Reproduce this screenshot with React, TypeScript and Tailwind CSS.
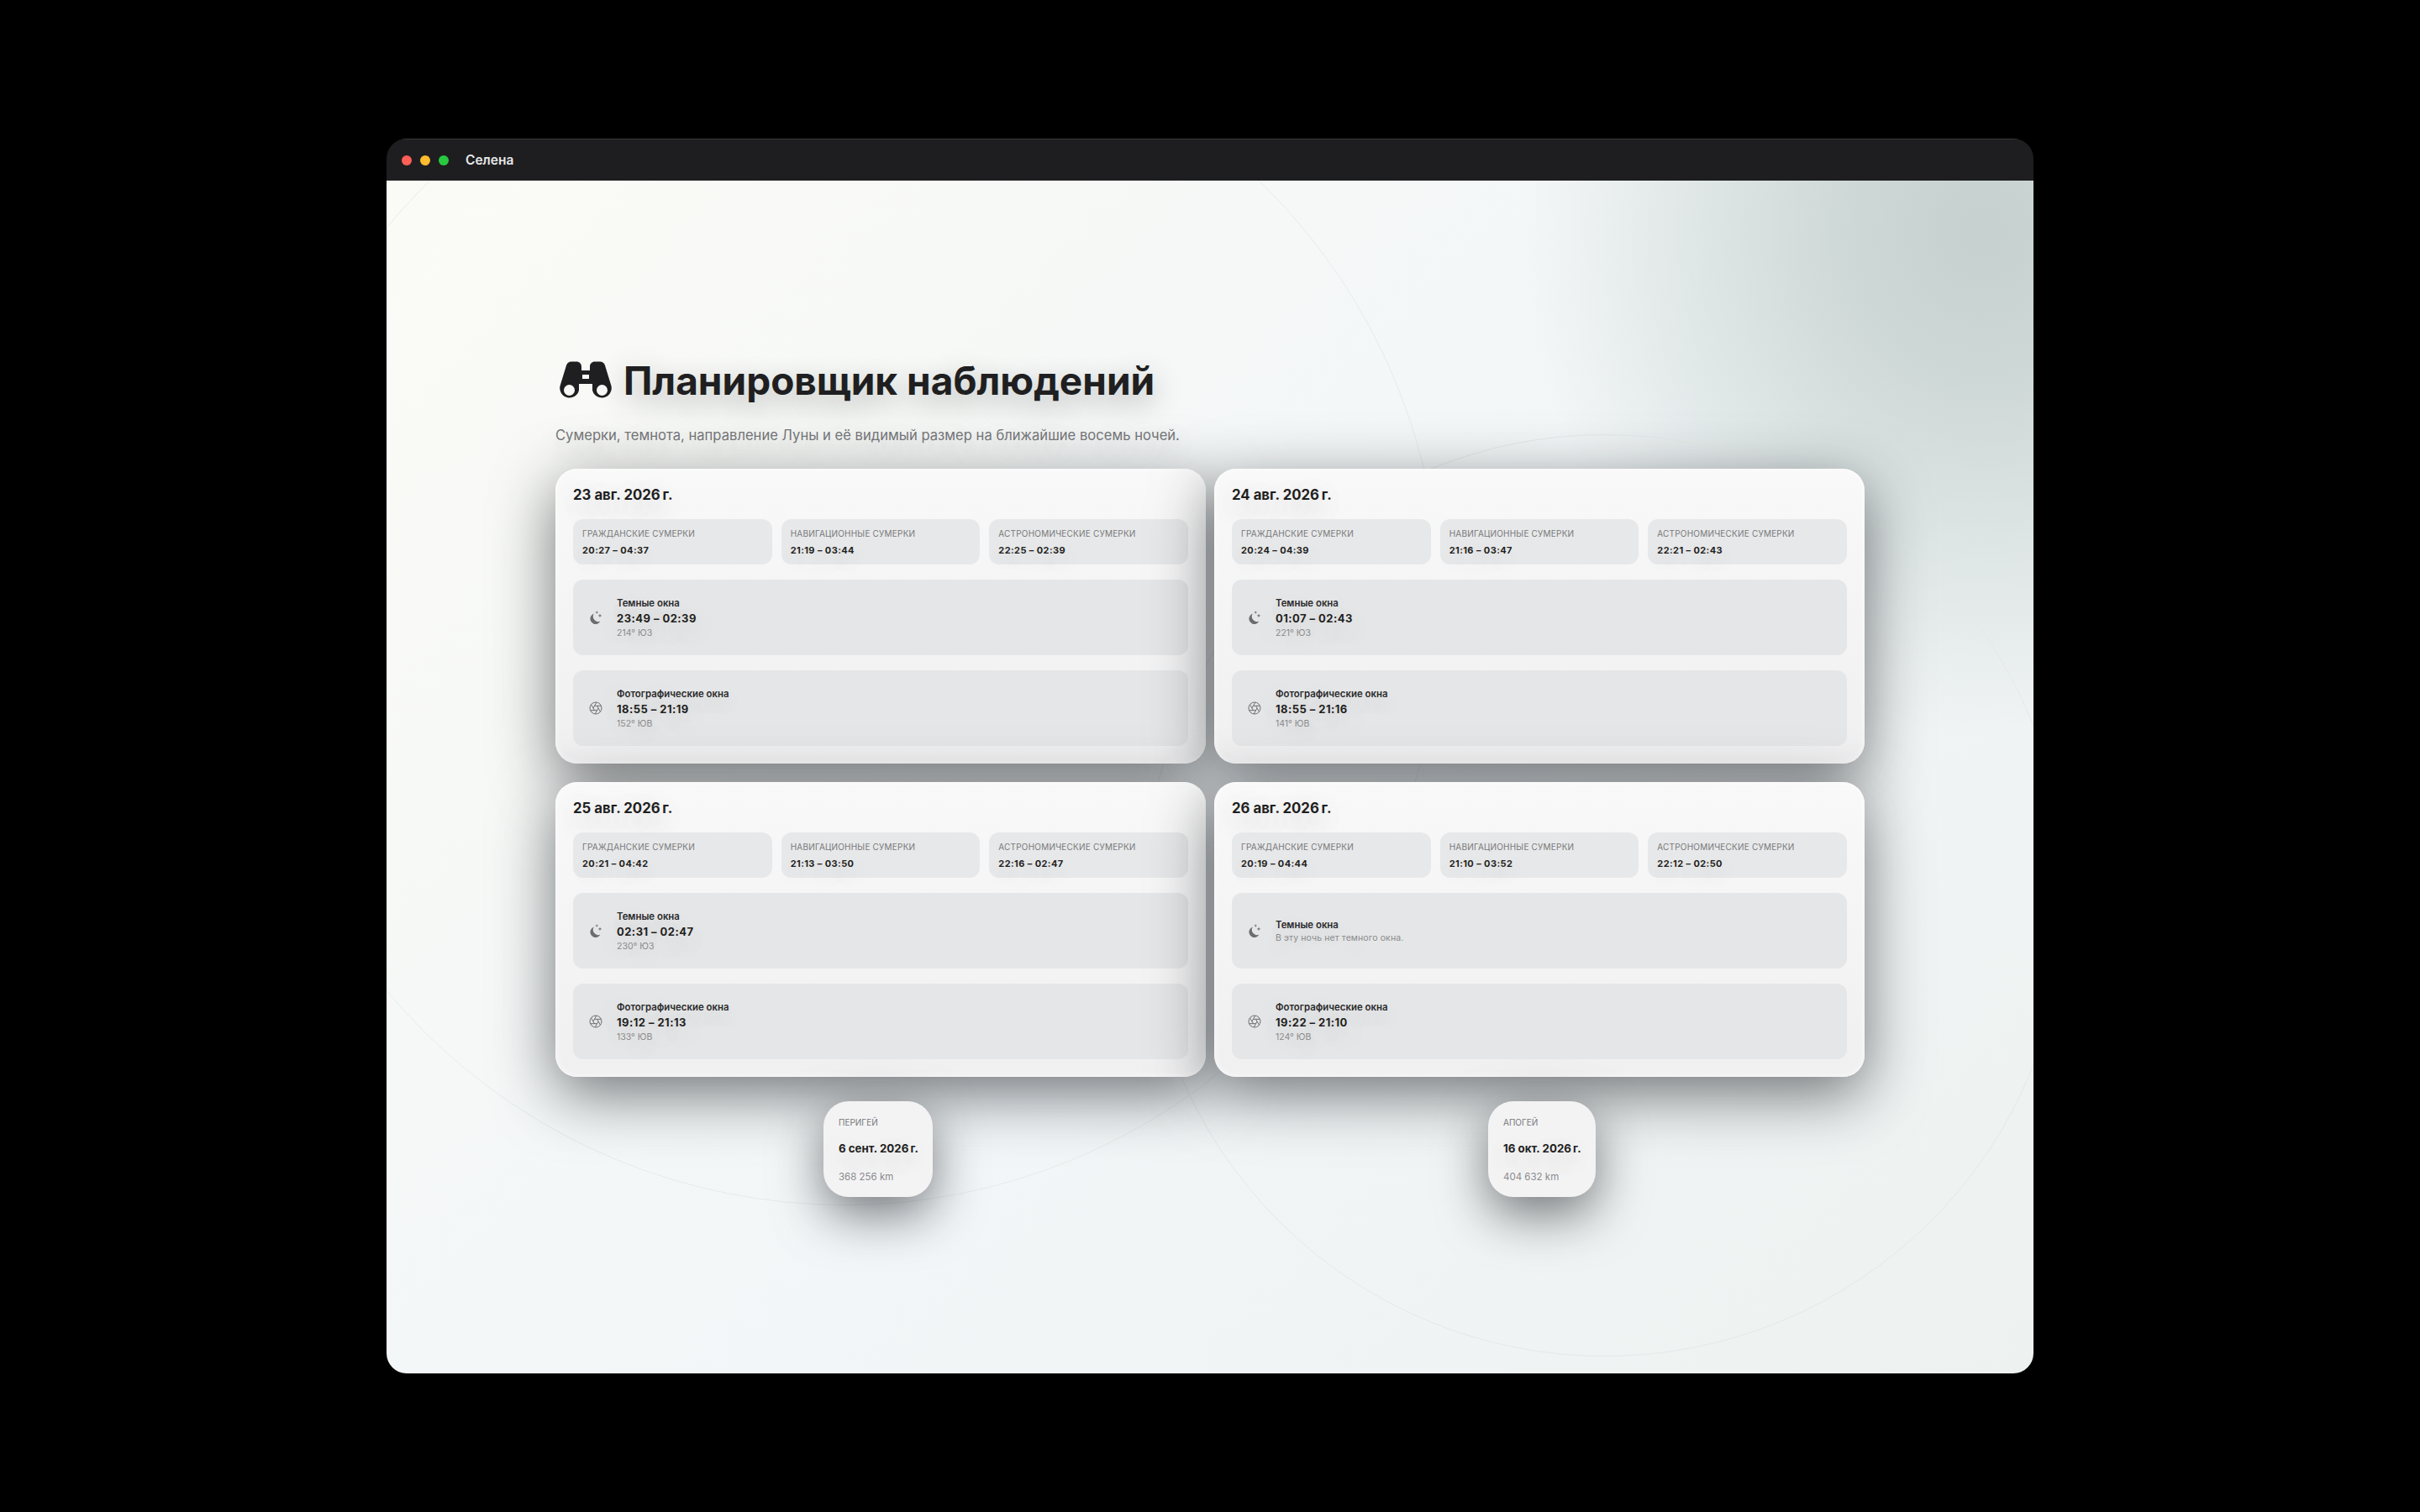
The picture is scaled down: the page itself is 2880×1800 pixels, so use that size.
import React from 'react';

type Night = {
  date: string;
  civil: string;
  nautical: string;
  astro: string;
  dark: { time: string; dir: string } | null;
  photo: { time: string; dir: string };
};

const nights: Night[] = [
  { date: '23 авг. 2026\u202Fг.', civil: '20:27 – 04:37', nautical: '21:19 – 03:44', astro: '22:25 – 02:39', dark: { time: '23:49 – 02:39', dir: '214° ЮЗ' }, photo: { time: '18:55 – 21:19', dir: '152° ЮВ' } },
  { date: '24 авг. 2026\u202Fг.', civil: '20:24 – 04:39', nautical: '21:16 – 03:47', astro: '22:21 – 02:43', dark: { time: '01:07 – 02:43', dir: '221° ЮЗ' }, photo: { time: '18:55 – 21:16', dir: '141° ЮВ' } },
  { date: '25 авг. 2026\u202Fг.', civil: '20:21 – 04:42', nautical: '21:13 – 03:50', astro: '22:16 – 02:47', dark: { time: '02:31 – 02:47', dir: '230° ЮЗ' }, photo: { time: '19:12 – 21:13', dir: '133° ЮВ' } },
  { date: '26 авг. 2026\u202Fг.', civil: '20:19 – 04:44', nautical: '21:10 – 03:52', astro: '22:12 – 02:50', dark: null, photo: { time: '19:22 – 21:10', dir: '124° ЮВ' } },
];

const softText = '[text-shadow:0_10px_34px_rgba(0,0,0,0.3)]';

const BinocularsIcon = () => (
  <svg viewBox="0 0 62 46" className="w-[62px] h-[46px] shrink-0" fill="#1f1f21">
    <path
      fillRule="evenodd"
      d="M14 .5h6c3.500 0 6 2.500 6 6V11h10V6.500c0-3.500 2.500-6 6-6h6c3 0 5 1.500 6 4.500l7.500 24.500a11.500 11.500 0 1 1-22.500 5V27H23v7.500a11.500 11.500 0 1 1-22.500-5L8 5c1-3 3-4.500 6-4.500ZM27 16v5h8v-5ZM11.500 28a6.500 6.500 0 1 0 0 13 6.500 6.500 0 0 0 0-13Zm39 0a6.500 6.500 0 1 0 0 13 6.500 6.500 0 0 0 0-13Z"
    />
  </svg>
);

const MoonStarsIcon = () => (
  <svg viewBox="0 0 16 16" className="w-4 h-4" fill="#6d6d70">
    <path d="M5.800 3.600a6.300 6.300 0 1 0 7.400 9.100A6.200 6.200 0 0 1 5.800 3.600Z" />
    <path d="M9.200 0l.5 1.500 1.500.5-1.500.5-.5 1.500-.5-1.500L7.200 2l1.500-.5ZM13 3.500l.6 1.800 1.800.6-1.800.6-.6 1.800-.6-1.800-1.800-.6 1.800-.6Z" />
  </svg>
);

const ApertureIcon = () => (
  <svg viewBox="0 0 24 24" className="w-4 h-4" fill="none" stroke="#6d6d70" strokeWidth="1.500">
    <circle cx="12" cy="12" r="10.500" />
    <path d="m14.310 8 5.740 9.940M9.690 8h11.480M7.380 12l5.740-9.940M9.690 16 3.950 6.060M14.310 16H2.830M16.620 12l-5.740 9.940" />
  </svg>
);

const Twilight = ({ label, value }: { label: string; value: string }) => (
  <div className="flex-1 h-[54px] rounded-[12px] bg-[#e7e8e9] px-[11px] flex flex-col justify-center gap-[6px]">
    <div className="text-[10px] leading-[13px] tracking-[0.2px] text-[#77787a]">{label}</div>
    <div className={`text-[11px] leading-[14px] font-bold tracking-[0.4px] text-[#1f1f21] ${softText}`}>{value}</div>
  </div>
);

const WindowRow = ({ icon, title, time, dir, empty }: { icon: React.ReactNode; title: string; time?: string; dir?: string; empty?: string }) => (
  <div className="h-[90px] rounded-[12px] bg-[#e5e6e7] flex items-center pl-[19px]">
    <div className="w-4 h-4 mr-[17px] flex items-center justify-center">{icon}</div>
    <div className={`flex flex-col pt-[2px] ${softText}`}>
      <div className="text-[11.400px] leading-[14px] font-semibold text-[#2a2a2c]">{title}</div>
      {time ? (
        <>
          <div className="text-[13px] leading-[18px] mt-[2px] font-bold tracking-[0.45px] text-[#1f1f21]">{time}</div>
          <div className="text-[10.500px] leading-[14px] mt-[2px] text-[#8a8a8c]">{dir}</div>
        </>
      ) : (
        <div className="text-[10.500px] leading-[14px] mt-[2px] tracking-[0.1px] text-[#8a8a8c]">{empty}</div>
      )}
    </div>
  </div>
);

const NightCard = ({ night }: { night: Night }) => (
  <div className="h-[351px] rounded-[26px] bg-gradient-to-b from-[#f9f9f9] to-[#f0f0f1] px-[21px] pt-[17px] shadow-[0_20px_72px_rgba(30,34,38,0.62),inset_0_0_8px_rgba(255,255,255,0.7)]">
    <div className={`text-[16.800px] leading-[28px] font-bold text-[#1f1f21] ${softText}`}>{night.date}</div>
    <div className="flex gap-[11px] mt-[15px]">
      <Twilight label="ГРАЖДАНСКИЕ СУМЕРКИ" value={night.civil} />
      <Twilight label="НАВИГАЦИОННЫЕ СУМЕРКИ" value={night.nautical} />
      <Twilight label="АСТРОНОМИЧЕСКИЕ СУМЕРКИ" value={night.astro} />
    </div>
    <div className="flex flex-col gap-[18px] mt-[18px]">
      <WindowRow icon={<MoonStarsIcon />} title="Темные окна" time={night.dark?.time} dir={night.dark?.dir} empty="В эту ночь нет темного окна." />
      <WindowRow icon={<ApertureIcon />} title="Фотографические окна" time={night.photo.time} dir={night.photo.dir} />
    </div>
  </div>
);

const Extreme = ({ label, date, dist, className }: { label: string; date: string; dist: string; className: string }) => (
  <div className={`h-[114px] rounded-[30px] bg-[#f3f3f4] pl-[18px] pt-[2px] flex flex-col justify-center gap-[16px] shadow-[0_20px_60px_rgba(30,34,38,0.6)] ${className}`}>
    <div className="text-[10px] leading-[13px] text-[#77787a]">{label}</div>
    <div className={`text-[13.300px] leading-[17px] font-bold text-[#1f1f21] ${softText}`}>{date}</div>
    <div className="text-[11.500px] leading-[14px] mt-[2px] text-[#8a8a8c]">{dist}</div>
  </div>
);

export default function App() {
  return (
    <div className="w-[2880px] h-[1800px] bg-black pt-[165px] font-['Inter',sans-serif] overflow-hidden">
      <div className="ml-[460px] w-[1960px] h-[1470px] rounded-[24px] overflow-hidden flex flex-col">
        {/* Title bar */}
        <header className="h-[50px] shrink-0 bg-[#1e1e20] border-t border-[#3a3a3c] flex items-center pl-[18px]">
          <span className="w-3 h-3 rounded-full bg-[#ff5f57]" />
          <span className="w-3 h-3 rounded-full bg-[#febc2e] ml-[10px]" />
          <span className="w-3 h-3 rounded-full bg-[#28c840] ml-[10px]" />
          <span className="ml-[20px] text-[15.500px] font-semibold text-[#e8e8e8]">Селена</span>
        </header>

        {/* Main */}
        <main className="relative flex-1 overflow-hidden bg-[linear-gradient(135deg,#fbfbf6_0%,#f2f6f8_55%,#edf1ef_100%)] pl-[201px] pt-[210px]">
          <div className="absolute right-[-490px] top-[-540px] w-[1100px] h-[1200px] rounded-full bg-[radial-gradient(closest-side,#c6d1cf_0%,rgba(200,211,209,0.85)_30%,rgba(225,233,235,0)_100%)]" />
          <div className="absolute left-[-165px] top-[-200px] w-[1420px] h-[1420px] rounded-full border border-[#e6ebeb]" />
          <div className="absolute left-[901px] top-[302px] w-[1098px] h-[1098px] rounded-full border border-[#e4e9e9]" />

          <div className="relative w-[1558px]">
            <h1 className={`flex items-center gap-[14px] pl-[5px] h-[56px] text-[46px] leading-none font-bold text-[#1f1f21] ${softText}`}>
              <BinocularsIcon />
              Планировщик наблюдений
            </h1>
            <p className={`mt-[24px] text-[16.600px] leading-[26px] text-[#77787a] ${softText}`}>
              Сумерки, темнота, направление Луны и её видимый размер на ближайшие восемь ночей.
            </p>
            <div className="grid grid-cols-2 gap-x-[10px] gap-y-[22px] mt-[27px]">
              {nights.map((n) => (
                <NightCard key={n.date} night={n} />
              ))}
            </div>
            <div className="flex mt-[29px] pl-[319px]">
              <Extreme label="ПЕРИГЕЙ" date={'6 сент. 2026\u202Fг.'} dist="368 256 km" className="w-[130px]" />
              <Extreme label="АПОГЕЙ" date={'16 окт. 2026\u202Fг.'} dist="404 632 km" className="w-[128px] ml-[661px]" />
            </div>
          </div>
        </main>
      </div>
    </div>
  );
}
